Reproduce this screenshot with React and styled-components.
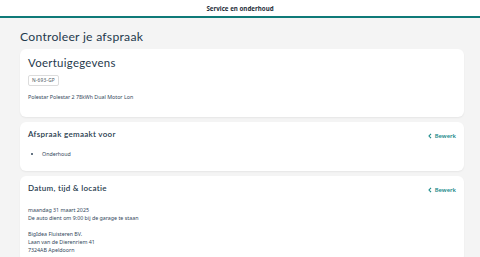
import React from 'react';
import styled, { createGlobalStyle } from 'styled-components';

const GlobalStyle = createGlobalStyle`
    html, body {
        margin: 0;
        padding: 0;
        background: #f4f4f4;
        font-family: "Noto Sans", "Liberation Sans", sans-serif;
        color: #1f3a4d;
    }
`;

const TopBar = styled("header")`
    height: 16px;
    background: #ffffff;
    border-bottom: 2px solid #0f7a78;
    display: flex;
    align-items: center;
    justify-content: center;
    font-size: 6.2px;
    font-weight: 700;
    color: #1f2f3a;
`;

const Page = styled("main")`
    padding: 12px 16px 0 20px;
    display: flex;
    flex-direction: column;
    gap: 5px;
`;

const PageTitle = styled("h1")`
    margin: 0;
    font-family: "Lato", "Noto Sans", sans-serif;
    font-size: 12.2px;
    font-weight: 400;
    line-height: 14px;
    color: #1f3a4d;
    letter-spacing: 0.25px;
`;

const Card = styled("section")`
    background: #ffffff;
    border-radius: 6px;
    box-shadow: 0 1px 2px rgba(0, 0, 0, 0.06);
    padding: ${props => props.$pad || "8px 8px 10px 8px"};
    min-height: ${props => props.$minHeight || "auto"};
    box-sizing: border-box;
`;

const CardHead = styled("div")`
    display: flex;
    justify-content: space-between;
    align-items: center;
`;

const CardTitle = styled("h2")`
    margin: 0;
    font-family: "Lato", "Noto Sans", sans-serif;
    font-size: ${props => props.$big ? "11.4px" : "8px"};
    font-weight: ${props => props.$big ? 400 : 600};
    line-height: ${props => props.$big ? "14px" : "12px"};
    color: #1f3a4d;
    letter-spacing: 0.3px;
`;

const EditLink = styled("a")`
    display: flex;
    align-items: center;
    gap: 3px;
    font-size: 5.8px;
    font-weight: 600;
    color: #1a8a8a;
    margin-top: 4px;
    cursor: pointer;
`;

const Plate = styled("div")`
    width: fit-content;
    margin-top: 5px;
    padding: 1px 3px;
    border: 1px solid #dcdcdc;
    border-radius: 2px;
    font-size: 4.8px;
    line-height: 7px;
    color: #4a5560;
    letter-spacing: 0.2px;
`;

const Text = styled("p")`
    margin: ${props => props.$margin || "0"};
    font-size: 5.3px;
    line-height: 8px;
    color: #33475b;
`;

const BulletList = styled("ul")`
    margin: 10px 0 0 0;
    padding-left: 14px;
    font-size: 5.3px;
    line-height: 8px;
    color: #33475b;
`;

function Chevron() {
    return (
        <svg width="4" height="6" viewBox="0 0 4 6">
            <path d="M3 0.8 L1 3 L3 5.2" fill="none" stroke="#1a8a8a" strokeWidth="1.1" />
        </svg>
    );
}

export default function App() {
    return (
        <>
            <GlobalStyle />
            <TopBar>Service en onderhoud</TopBar>
            <Page>
                <PageTitle>Controleer je afspraak</PageTitle>
                <Card $pad="7px 8px 8px 8px" $minHeight="68px">
                    <CardTitle $big>Voertuigegevens</CardTitle>
                    <Plate>N-693-GP</Plate>
                    <Text $margin="7px 0 0 0">Polestar Polestar 2 78kWh Dual Motor Lon</Text>
                </Card>
                <Card $pad="6px 8px 8px 8px" $minHeight="49px">
                    <CardHead>
                        <CardTitle>Afspraak gemaakt voor</CardTitle>
                        <EditLink><Chevron />Bewerk</EditLink>
                    </CardHead>
                    <BulletList>
                        <li>Onderhoud</li>
                    </BulletList>
                </Card>
                <Card $pad="6px 8px 8px 8px">
                    <CardHead>
                        <CardTitle>Datum, tijd &amp; locatie</CardTitle>
                        <EditLink><Chevron />Bewerk</EditLink>
                    </CardHead>
                    <Text $margin="12px 0 0 0">maandag 31 maart 2025<br />De auto dient om 9:00 bij de garage te staan</Text>
                    <Text $margin="8px 0 0 0">BigIdea Fluisteren BV.<br />Laan van de Dierenriem 41<br />7324AB Apeldoorn</Text>
                </Card>
            </Page>
        </>
    );
}
